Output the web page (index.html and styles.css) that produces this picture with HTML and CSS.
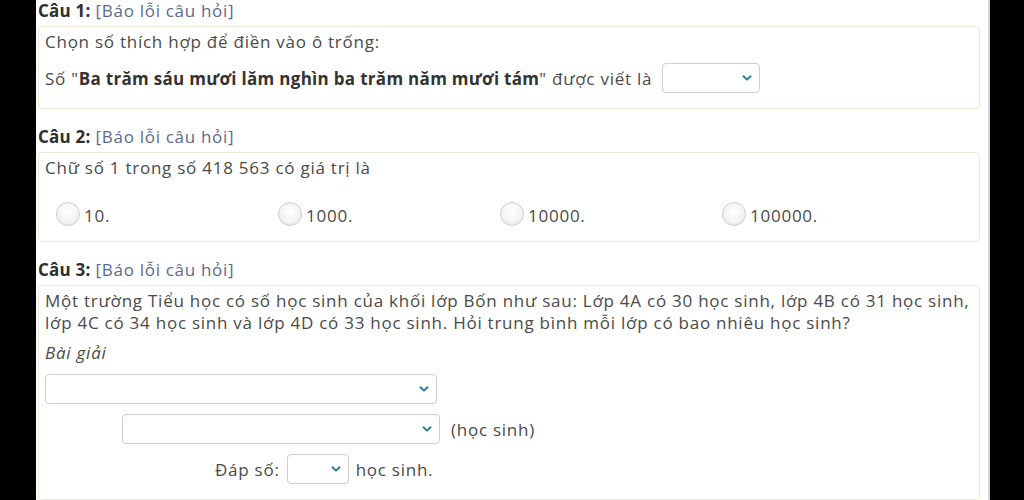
FILE: index.html
```html
<!DOCTYPE html>
<html lang="vi">
<head>
<meta charset="utf-8">
<title>Câu hỏi</title>
<link rel="stylesheet" href="styles.css">
</head>
<body>
<div class="sheet">
  <div class="question">
    <div class="q-head"><b>Câu 1:</b> <a class="report">[Báo lỗi câu hỏi]</a></div>
    <div class="q-box">
      <p class="line">Chọn số thích hợp để điền vào ô trống:</p>
      <div class="row r-first">
        <span>Số "<b>Ba trăm sáu mươi lăm nghìn ba trăm năm mươi tám</b>" được viết là</span>
        <span class="sel w98"><select></select><svg class="chev" viewBox="0 0 10 6"><path d="M1.5 1.2 L5 4.6 L8.5 1.2"/></svg></span>
      </div>
    </div>
  </div>

  <div class="question">
    <div class="q-head"><b>Câu 2:</b> <a class="report">[Báo lỗi câu hỏi]</a></div>
    <div class="q-box">
      <p class="line">Chữ số 1 trong số 418 563 có giá trị là</p>
      <div class="options">
        <label class="opt"><span class="radio"></span>10.</label>
        <label class="opt"><span class="radio"></span>1000.</label>
        <label class="opt"><span class="radio"></span>10000.</label>
        <label class="opt"><span class="radio"></span>100000.</label>
      </div>
    </div>
  </div>

  <div class="question">
    <div class="q-head"><b>Câu 3:</b> <a class="report">[Báo lỗi câu hỏi]</a></div>
    <div class="q-box">
      <p class="line">Một trường Tiểu học có số học sinh của khối lớp Bốn như sau: Lớp 4A có 30 học sinh, lớp 4B có 31 học sinh, lớp 4C có 34 học sinh và lớp 4D có 33 học sinh. Hỏi trung bình mỗi lớp có bao nhiêu học sinh?</p>
      <p class="line solve">Bài giải</p>
      <div class="row r-step">
        <span class="sel w392"><select></select><svg class="chev" viewBox="0 0 10 6"><path d="M1.5 1.2 L5 4.6 L8.5 1.2"/></svg></span>
      </div>
      <div class="row r-step ind1">
        <span class="sel w317"><select></select><svg class="chev" viewBox="0 0 10 6"><path d="M1.5 1.2 L5 4.6 L8.5 1.2"/></svg></span>
        <span class="unit">(học sinh)</span>
      </div>
      <div class="row r-step ind2">
        <span>Đáp số:</span>
        <span class="sel w62"><select></select><svg class="chev" viewBox="0 0 10 6"><path d="M1.5 1.2 L5 4.6 L8.5 1.2"/></svg></span>
        <span>học sinh.</span>
      </div>
    </div>
  </div>
</div>
</body>
</html>
```

FILE: styles.css
```css
html, body {
  margin: 0;
  padding: 0;
  background: #000;
  height: 500px;
  overflow: hidden;
}
.sheet {
  margin-left: 36px;
  width: 942px;
  height: 500px;
  padding: 0 8px 0 2px;
  background: #fff;
  border-right: 2px solid #d6d6d6;
  font-family: "Open Sans", "Liberation Sans", sans-serif;
  font-size: 17px;
  letter-spacing: 0.75px;
  color: #4a4a4a;
  overflow: hidden;
}
.question + .question { margin-top: 17px; }
.q-head {
  line-height: 22px;
  height: 22px;
  margin-bottom: 4px;
  color: #333;
  letter-spacing: 0.7px;
}
.q-head b { font-weight: 700; color: #2f2f2f; letter-spacing: 0.2px; }
.report { color: #5b6a8e; text-decoration: none; }
.q-box {
  border: 1px solid #efe8d4;
  border-radius: 4px;
  padding: 4px 6px 15px;
}
.line {
  margin: 0;
  line-height: 22px;
}
.row {
  display: flex;
  align-items: center;
  height: 30px;
  gap: 6px;
}
.r-first { margin-top: 10px; white-space: nowrap; gap: 10px; }
.r-first b { font-weight: 700; color: #333; letter-spacing: 0.3px; }
.solve { font-style: italic; margin-top: 8px; }
.r-step { margin-top: 10px; }
.ind1 { padding-left: 77px; gap: 11px; }
.ind2 { padding-left: 170px; gap: 7px; }
.sel {
  position: relative;
  display: inline-block;
  height: 30px;
}
.sel select {
  appearance: none;
  -webkit-appearance: none;
  width: 100%;
  height: 30px;
  border: 1px solid #cfcfcf;
  border-radius: 4px;
  background: #fff;
  margin: 0;
  box-sizing: border-box;
}
.chev {
  position: absolute;
  right: 8px;
  top: 12px;
  width: 10px;
  height: 6px;
  fill: none;
  stroke: #2f7e9e;
  stroke-width: 2;
  stroke-linecap: round;
  stroke-linejoin: round;
}
.w98 { width: 98px; }
.w392 { width: 392px; }
.w317 { width: 318px; }
.w62 { width: 62px; }
.options {
  display: grid;
  grid-template-columns: repeat(4, 222px);
  margin-top: 21px;
  padding-left: 11px;
  height: 26px;
}
.opt {
  display: flex;
  align-items: center;
  gap: 4px;
  line-height: 26px;
  padding-top: 3px;
}
.radio {
  width: 24px;
  height: 24px;
  margin-top: -5px;
  border-radius: 50%;
  border: 1px solid #cdcdcd;
  background: radial-gradient(circle at 50% 40%, #ffffff 0%, #f4f4f4 55%, #e2e2e2 100%);
  box-sizing: border-box;
}
```
